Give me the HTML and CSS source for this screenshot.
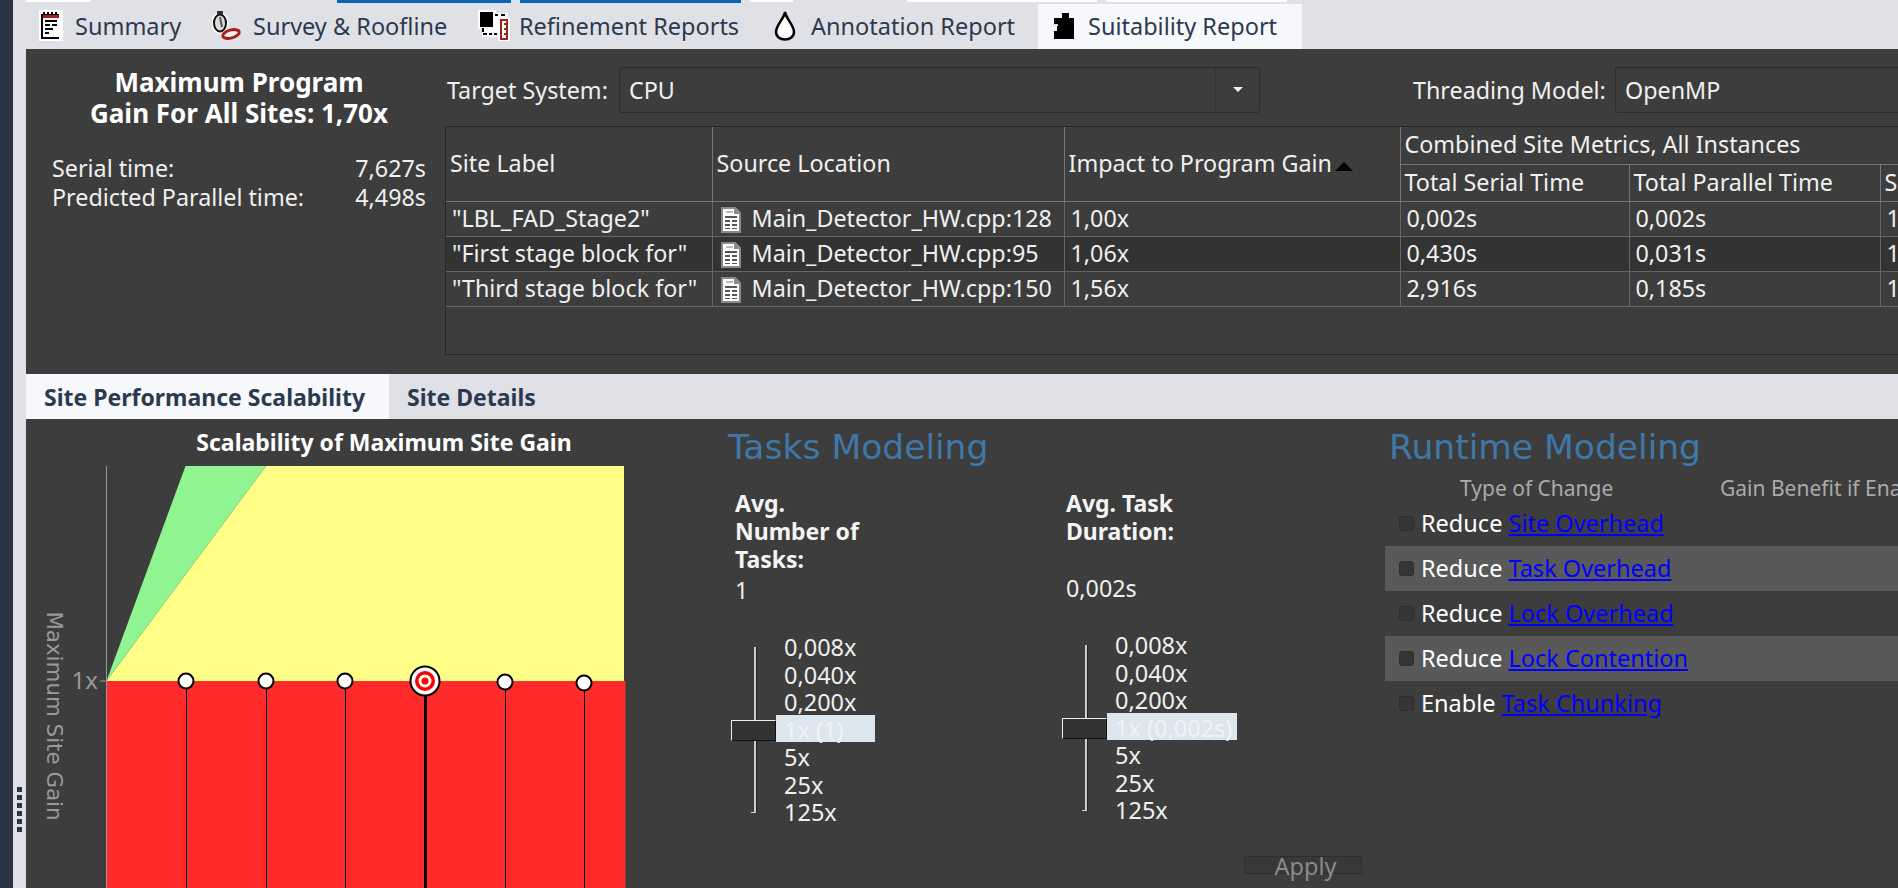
FILE: index.html
```html
<!DOCTYPE HTML>
<html>
<head>
<meta charset="utf-8" />
<title>Suitability Report</title>
<link rel="stylesheet" href="styles.css">
</head>
<body>
<div id="rail">
	<div class="rail_dark"></div>
	<div class="rail_light">
		<i></i><i></i><i></i><i></i><i></i><i></i>
	</div>
</div>
<div id="main">
	<div id="top_tabs">
		<div class="stubs">
			<span class="stub white s1"></span>
			<span class="stub blue s2"></span>
			<span class="stub blue s3"></span>
			<span class="stub white s4"></span>
			<span class="stub white s5"></span>
			<span class="stub white s6"></span>
		</div>
		<div class="tab_row">
			<div class="tab t_summary">
				<svg width="24" height="31" viewBox="0 0 24 31" shape-rendering="crispEdges">
					<rect width="24" height="31" fill="#fff"/>
					<path d="M2 4h2V2h2v2h2V2h2v2h2V2h2v2h2V2h2v2h2v25H2z" fill="#000"/>
					<rect x="4" y="5" width="16" height="3" fill="#a5201c"/>
					<rect x="4" y="8" width="16" height="19" fill="#fff"/>
					<path d="M6 10h12v2H6zM6 14h5v2H6zM13 14h5v2h-5zM6 18h8v2H6zM6 22h4v2H6z" fill="#000"/>
				</svg>
				<span>Summary</span>
			</div>
			<div class="tab t_survey">
				<svg width="30" height="31" viewBox="0 0 30 31">
					<ellipse cx="8" cy="13" rx="6.500" ry="9" fill="#eee" stroke="#fff" stroke-width="4"/>
					<ellipse cx="8" cy="13" rx="6" ry="8.500" fill="#ddd" stroke="#111" stroke-width="2"/>
					<path d="M8 7l2 10" stroke="#555" stroke-width="2"/>
					<rect x="5" y="1" width="6" height="3" fill="#333"/>
					<ellipse cx="19" cy="24" rx="10" ry="5.500" fill="#fff" transform="rotate(-15 19 24)"/>
					<ellipse cx="19" cy="24" rx="8.500" ry="4" fill="#eee" stroke="#a5201c" stroke-width="3" transform="rotate(-15 19 24)"/>
				</svg>
				<span>Survey &amp; Roofline</span>
			</div>
			<div class="tab t_refine">
				<svg width="32" height="31" viewBox="0 0 32 31" shape-rendering="crispEdges">
					<path d="M0 0h18v3h12v5h2v23H20v-4H4v-8H0z" fill="#fff"/>
					<rect x="2" y="2" width="13" height="15" fill="#000"/>
					<path d="M17 4h3v2h-3zM23 4h4v2h-4zM4 18h2v4H4zM5 23h4v2H5zM11 23h3v2h-3zM16 23h3v2h-3z" fill="#000"/>
					<rect x="22" y="9" width="8" height="21" fill="#a5201c"/>
					<path d="M24 11h4v17h-4z" fill="#fff"/>
					<path d="M26 13h2v2h-2zM26 18h2v2h-2zM26 23h2v2h-2z" fill="#a5201c"/>
				</svg>
				<span>Refinement Reports</span>
			</div>
			<div class="tab t_annot">
				<svg width="24" height="31" viewBox="0 0 24 31">
					<path d="M12 2C11 9 3 15 3 22c0 4.500 4 7.500 9 7.500s9-3 9-7.500C21 15 13 9 12 2z" fill="#fff" stroke="#000" stroke-width="2.500"/>
				</svg>
				<span>Annotation Report</span>
			</div>
			<div class="tab t_suit on">
				<svg width="22" height="28" viewBox="0 0 22 28" shape-rendering="crispEdges">
					<path d="M7 6h2V1h7v5h5v21H1v-8h3v-6H1V6z" fill="#000"/>
					<rect x="0" y="12" width="5" height="2" fill="#ddd"/>
				</svg>
				<span>Suitability Report</span>
			</div>
		</div>
	</div>

	<div id="upper">
		<div id="summary">
			<div class="gain">Maximum Program<br>Gain For All Sites: 1,70x</div>
			<div class="times">
				<div class="time_row"><span>Serial time:</span><span>7,627s</span></div>
				<div class="time_row"><span>Predicted Parallel time:</span><span>4,498s</span></div>
			</div>
		</div>
		<div id="site_pane">
			<div id="combos">
				<div class="lbl_target">Target System:</div>
				<div class="combo c_target">
					<div class="combo_val">CPU</div>
					<div class="combo_btn"><b></b></div>
				</div>
				<div class="lbl_thread">Threading Model:</div>
				<div class="combo c_thread">
					<div class="combo_val">OpenMP</div>
				</div>
			</div>
			<div id="table_box">
				<table>
					<colgroup>
						<col class="w1"><col class="w2"><col class="w3"><col class="w4"><col class="w5"><col class="w6">
					</colgroup>
					<thead>
						<tr>
							<th rowspan="2">Site Label</th>
							<th rowspan="2">Source Location</th>
							<th rowspan="2">Impact to Program Gain <b class="sort"></b></th>
							<th colspan="3">Combined Site Metrics, All Instances</th>
						</tr>
						<tr>
							<th>Total Serial Time</th>
							<th>Total Parallel Time</th>
							<th>Site Gain</th>
						</tr>
					</thead>
					<tbody>
						<tr>
							<td>"LBL_FAD_Stage2"</td>
							<td><svg class="file" width="20" height="26" viewBox="0 0 20 26" shape-rendering="crispEdges"><use href="#file_icon"/></svg>Main_Detector_HW.cpp:128</td>
							<td>1,00x</td><td>0,002s</td><td>0,002s</td><td>1,00x</td>
						</tr>
						<tr class="dark">
							<td>"First stage block for"</td>
							<td><svg class="file" width="20" height="26" viewBox="0 0 20 26" shape-rendering="crispEdges"><use href="#file_icon"/></svg>Main_Detector_HW.cpp:95</td>
							<td>1,06x</td><td>0,430s</td><td>0,031s</td><td>13,87x</td>
						</tr>
						<tr>
							<td>"Third stage block for"</td>
							<td><svg class="file" width="20" height="26" viewBox="0 0 20 26" shape-rendering="crispEdges"><use href="#file_icon"/></svg>Main_Detector_HW.cpp:150</td>
							<td>1,56x</td><td>2,916s</td><td>0,185s</td><td>15,76x</td>
						</tr>
					</tbody>
				</table>
			</div>
		</div>
	</div>

	<div id="lower_tabs">
		<div class="ltab on">Site Performance Scalability</div>
		<div class="ltab">Site Details</div>
	</div>

	<div id="lower">
		<div id="chart_col">
			<div class="chart_title">Scalability of Maximum Site Gain</div>
			<svg id="chart" width="674" height="422" viewBox="0 0 674 422">
				<polygon points="80.500,215 240,0 598,0 598,215" fill="#ffff88"/>
				<polygon points="80.500,215 159.500,0 240,0" fill="#90f490"/>
				<rect x="80.500" y="215" width="519" height="207" fill="#ff2a2a"/>
				<path d="M80.500 0V422M74 215H80" stroke="#999" stroke-width="1" fill="none"/>
				<text class="axis_x" x="72" y="223" text-anchor="end">1x</text>
				<text class="axis_y" transform="translate(14 250) rotate(90)" text-anchor="middle" x="0" y="-7">Maximum Site Gain</text>
				<g stroke="#000" stroke-width="1">
					<path d="M160.500 215V422M240.500 215V422M319.500 215V422M479.500 215V422M558.500 215V422"/>
				</g>
				<path d="M399.500 215V422" stroke="#000" stroke-width="3"/>
				<g fill="#fff" stroke="#000" stroke-width="2">
					<ellipse cx="160" cy="215" rx="7.500" ry="7.500"/>
					<ellipse cx="240" cy="215" rx="7.500" ry="7.500"/>
					<ellipse cx="319" cy="215" rx="7.500" ry="7.500"/>
					<ellipse cx="479" cy="216" rx="7.500" ry="7.500"/>
					<ellipse cx="558" cy="217" rx="7.500" ry="7.500"/>
				</g>
				<circle cx="399" cy="215" r="14.500" fill="#fff" stroke="#000" stroke-width="2"/>
				<circle cx="399" cy="215" r="10" fill="#f00"/>
				<circle cx="399" cy="215" r="6.500" fill="#fff"/>
				<circle cx="399" cy="215" r="3.500" fill="#f00"/>
			</svg>
		</div>

		<div id="tasks_col">
			<h2>Tasks Modeling</h2>
			<div class="tasks_grid">
				<div class="param">
					<div class="param_name">Avg.<br>Number of<br>Tasks:</div>
					<div class="param_val">1</div>
					<div class="slider">
						<div class="track"><span class="handle"></span></div>
						<ul class="ticks n1">
							<li>0,008x</li><li>0,040x</li><li>0,200x</li><li class="cur">1x (1)</li><li>5x</li><li>25x</li><li>125x</li>
						</ul>
					</div>
				</div>
				<div class="param">
					<div class="param_name">Avg. Task<br>Duration:<br>&nbsp;</div>
					<div class="param_val up">0,002s</div>
					<div class="slider">
						<div class="track"><span class="handle"></span></div>
						<ul class="ticks n2">
							<li>0,008x</li><li>0,040x</li><li>0,200x</li><li class="cur">1x (0,002s)</li><li>5x</li><li>25x</li><li>125x</li>
						</ul>
					</div>
				</div>
			</div>
			<div class="apply_row"><div class="apply">Apply</div></div>
		</div>

		<div id="runtime_col">
			<h2>Runtime Modeling</h2>
			<div class="rt_head"><span class="h_type">Type of Change</span><span>Gain Benefit if Enabled</span></div>
			<div class="rt_row"><i class="check"></i>Reduce&nbsp;<a href="#">Site Overhead</a></div>
			<div class="rt_row alt"><i class="check"></i>Reduce&nbsp;<a href="#">Task Overhead</a></div>
			<div class="rt_row"><i class="check"></i>Reduce&nbsp;<a href="#">Lock Overhead</a></div>
			<div class="rt_row alt"><i class="check"></i>Reduce&nbsp;<a href="#">Lock Contention</a></div>
			<div class="rt_row"><i class="check"></i>Enable&nbsp;<a href="#">Task Chunking</a></div>
		</div>
	</div>
</div>

<svg class="defs" width="0" height="0">
	<symbol id="file_icon" viewBox="0 0 20 26">
		<path d="M0 0h14l6 6v20H0z" fill="#8a8a8a"/>
		<path d="M2 2h11v5h5v17H2z" fill="#fff"/>
		<path d="M5 4h7v2H5z" fill="#bbb"/>
		<path d="M4 9h12v2H4zM4 13h5v2H4zM11 13h5v2h-5zM4 17h5v2H4zM11 17h5v2h-5zM4 21h5v1H4zM11 21h5v1h-5z" fill="#555"/>
	</symbol>
</svg>
</body>
</html>
```
FILE: styles.css
```css
*{ padding:0; margin:0; border:0; list-style-type:none; box-sizing:border-box; }
html,body{ width:1898px; height:888px; overflow:hidden; }
body{ display:flex; font-family:"Noto Sans","Liberation Sans",sans-serif; font-size:23.3px; color:#f0f0f0; background:#3d3d3d; }
.defs{ position:absolute; }

/* left rail */
#rail{ width:26px; display:flex; flex:none; }
.rail_dark{ width:13px; background:#2b3445; }
.rail_light{ width:13px; background:#e0e1e6; padding:787px 0 0 4px; }
.rail_light i{ display:block; width:5px; height:5px; margin-bottom:3px; background:#2b3445; }

#main{ flex:1; min-width:0; display:flex; flex-direction:column; overflow:hidden; }

/* top tabs */
#top_tabs{ height:49px; background:#e0e1e6; flex:none; overflow:hidden; }
.stubs{ height:4px; display:flex; align-items:flex-start; }
.stub{ display:block; flex:none; }
.stub.white{ height:2px; background:#fff; }
.stub.blue{ height:3px; background:#0a62b4; }
.s1{ width:65px; margin-right:246px; }
.s2{ width:174px; margin-right:9px; }
.s3{ width:221px; margin-right:9px; }
.s4{ width:43px; margin-right:114px; }
.s5{ width:190px; margin-right:9px; }
.s6{ width:181px; }
.tab_row{ display:flex; height:45px; }
.tab{ display:flex; flex:none; align-items:center; gap:12px; font-size:23.5px; color:#2b3a4e; height:45px; padding-bottom:2px; white-space:nowrap; }
.tab svg{ flex:none; }
.t_summary{ width:186px; padding-left:13px; }
.t_survey{ width:266px; gap:11px; }
.t_refine{ width:295px; gap:9px; }
.t_annot{ width:279px; gap:14px; }
.t_suit{ width:264px; padding-left:15px; gap:13px; background:#f7f8fb; margin-left:-14px; }

/* upper panel */
#upper{ height:325px; flex:none; display:flex; background:#3d3d3d; }
#summary{ width:419px; flex:none; padding:18px 19px 0 26px; }
.gain{ font-weight:700; font-size:26px; line-height:31px; text-align:center; color:#fff; }
.times{ margin-top:25px; line-height:29px; }
.time_row{ display:flex; justify-content:space-between; }
#site_pane{ flex:1; min-width:0; }
#combos{ height:77px; display:flex; align-items:flex-start; padding-top:18px; }
.lbl_target{ width:174px; flex:none; padding:0 0 0 2px; line-height:46px; white-space:nowrap; }
.combo{ height:46px; display:flex; flex:none; border:1px solid #2c2c2c; border-radius:3px; line-height:44px; }
.c_target{ width:641px; margin-right:153px; }
.c_thread{ width:300px; }
.lbl_thread{ width:202px; flex:none; line-height:46px; white-space:nowrap; }
.combo_val{ flex:1; padding-left:9px; }
.combo_btn{ width:44px; border-left:1px solid #333; display:flex; align-items:center; justify-content:center; padding-bottom:2px; }
.combo_btn b{ display:block; border-top:5px solid #f0f0f0; border-left:5px solid transparent; border-right:5px solid transparent; }

/* table */
#table_box{ height:229px; border-top:1px solid #262626; border-left:1px solid #262626; border-bottom:1px solid #262626; overflow:hidden; }
table{ table-layout:fixed; border-collapse:collapse; width:1299px; }
.w1{ width:266px; } .w2{ width:352px; } .w3{ width:336px; } .w4{ width:229px; } .w5{ width:251px; } .w6{ width:200px; }
th,td{ border:1px solid #777; font-weight:400; text-align:left; white-space:nowrap; overflow:hidden; }
th{ height:37px; padding:0 0 2px 4px; border-top:0; }
td{ height:35px; padding:0 0 2px 6px; border-color:#666; }
tr th:first-child,tr td:first-child{ border-left:0; }
tr.dark td{ background:#333; }
.sort{ display:inline-block; vertical-align:1px; margin-left:-3px; border-bottom:9px solid #000; border-left:9px solid transparent; border-right:9px solid transparent; }
.file{ vertical-align:middle; margin:0 11px 0 2px; }

/* lower tabs */
#lower_tabs{ height:45px; flex:none; display:flex; background:#e0e1e6; }
.ltab{ font-weight:700; font-size:23px; color:#2b3a4e; line-height:46px; padding:0 18px; white-space:nowrap; }
.ltab.on{ background:#f7f8fb; width:363px; }

/* lower panel */
#lower{ flex:1; display:flex; min-height:0; background:#3d3d3d; }
#chart_col{ width:674px; flex:none; }
.chart_title{ height:47px; line-height:46px; font-weight:700; font-size:23px; color:#fff; text-align:center; padding-left:42px; }
#chart{ display:block; }
.axis_x{ font-size:24px; fill:#999; }
.axis_y{ font-size:21.4px; fill:#999; font-family:"DejaVu Sans",sans-serif; }

h2{ font-family:"DejaVu Sans",sans-serif; font-weight:400; font-size:34.5px; line-height:36px; color:#3f78a8; white-space:nowrap; }

#tasks_col{ width:685px; flex:none; padding:10px 0 0 28px; }
.tasks_grid{ display:flex; height:391px; padding:24px 0 0 7px; }
.param{ width:331px; flex:none; }
.param_name{ font-weight:700; line-height:28px; color:#f4f4f4; font-size:23px; }
.param_val{ height:31px; line-height:31px; margin-top:2px; }
.param_val.up{ margin:0 0 2px; }
.slider{ display:flex; margin-top:26px; }
.track{ position:relative; width:49px; height:166px; flex:none; margin-top:15px; }
.track:before{ content:""; position:absolute; left:19px; top:0; bottom:0; width:2px; background:#ccc; border-right:1px solid #222; }
.track:after{ content:""; position:absolute; left:16px; bottom:0; width:4px; height:1px; background:#ddd; }
.handle{ position:absolute; z-index:1; left:-4px; top:73px; width:45px; height:21px; background:#333; border:1px solid #111; border-top-color:#eee; border-left-color:#eee; }
.ticks{ font-size:23.5px; }
.ticks li{ height:27.7px; line-height:31px; padding-left:8px; white-space:nowrap; }
.ticks li.cur{ background:#dce6ef; color:#f0f4f7; height:27px; }
.n1{ width:99px; margin-left:-8px; }
.n2{ width:130px; margin-left:-8px; }
.apply_row{ display:flex; padding-left:516px; }
.apply{ width:118px; height:18px; line-height:18px; font-size:23.5px; text-align:center; color:#8a8a8a; background:#383838; border:1px solid #2e2e2e; border-radius:2px; padding-left:5px; }

#runtime_col{ flex:1; min-width:0; padding-top:10px; overflow:hidden; }
#runtime_col h2{ padding-left:4px; }
.rt_head{ height:36px; line-height:46px; color:#aaa; white-space:nowrap; padding-left:75px; font-size:21px; }
.h_type{ display:inline-block; width:260px; }
.rt_row{ height:45px; display:flex; align-items:center; padding:0 0 2px 14px; white-space:nowrap; color:#fff; font-size:23.5px; }
.rt_row.alt{ background:#595959; }
.rt_row a{ color:#0000ff; text-decoration:underline; }
.check{ display:block; flex:none; width:15px; height:15px; margin:2px 7px 0 0; border:1px solid #2e2e2e; border-radius:3px; background:#363636; }
```
